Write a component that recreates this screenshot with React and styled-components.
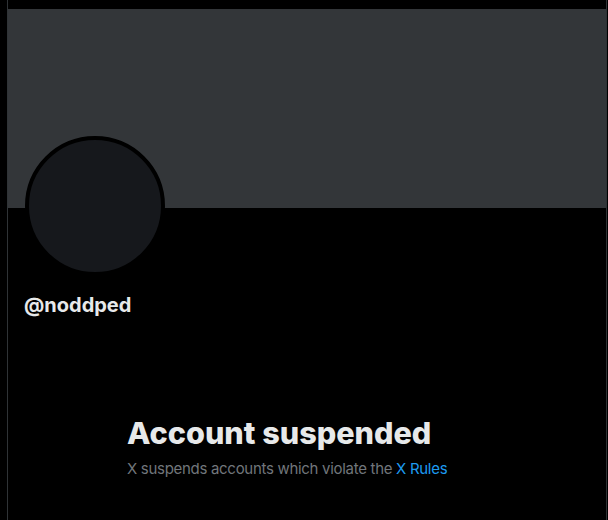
import React from "react";
import styled, { createGlobalStyle } from "styled-components";

const line = "#2f3336";
const textMain = "#e7e9ea";
const textMuted = "#71767b";
const blue = "#1d9bf0";

const GlobalStyle = createGlobalStyle`
  html, body {
    margin: 0;
    padding: 0;
    background: #000;
  }
  body {
    font-family: Inter, "Noto Sans", "Liberation Sans", sans-serif;
    color: ${textMain};
  }
`;

const Column = styled.main`
  box-sizing: border-box;
  width: 600px;
  min-height: 520px;
  margin-left: 7px;
  padding-top: 9px;
  border-left: 1px solid ${line};
  border-right: 1px solid ${line};
`;

const Banner = styled.div`
  height: 199px;
  background: #333639;
`;

const ProfileHead = styled.section`
  padding: 0 16px 0 17px;
`;

const Avatar = styled.div`
  box-sizing: border-box;
  width: 140px;
  height: 140px;
  margin-top: -72px;
  border-radius: 50%;
  border: 4px solid #000;
  background: #16181c;
`;

const Handle = styled.div`
  margin: 17px 0 0 -1px;
  font-size: 20px;
  font-weight: 700;
  line-height: 24px;
  color: ${textMain};
`;

const EmptyState = styled.section`
  box-sizing: border-box;
  max-width: 400px;
  margin: 98px auto 0;
  padding: 0 20px;
`;

const Title = styled.h2`
  margin: 0 0 8px;
  font-size: 30.6px;
  font-weight: 800;
  line-height: 36px;
  color: ${textMain};
`;

const Sub = styled.p`
  margin: 0;
  font-size: 15px;
  line-height: 20px;
  letter-spacing: -0.3px;
  color: ${textMuted};
`;

const Link = styled.a`
  color: ${blue};
  text-decoration: none;
`;

export default function App() {
  return (
    <>
      <GlobalStyle />
      <Column>
        <Banner />
        <ProfileHead>
          <Avatar />
          <Handle>@noddped</Handle>
        </ProfileHead>
        <EmptyState>
          <Title>Account suspended</Title>
          <Sub>
            X suspends accounts which violate the <Link href="#">X Rules</Link>
          </Sub>
        </EmptyState>
      </Column>
    </>
  );
}
